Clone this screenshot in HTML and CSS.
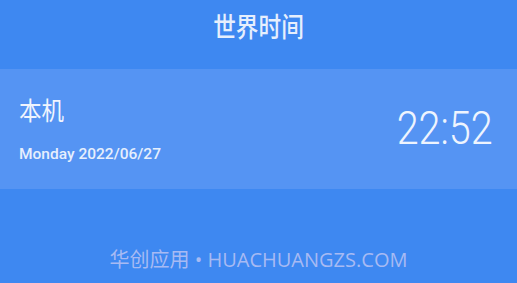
FILE: index.html
```html
<!DOCTYPE html>
<html lang="zh">
<head>
<meta charset="utf-8">
<link rel="stylesheet" href="styles.css">
</head>
<body>
<div class="page">
  <header class="title">世界时间</header>
  <section class="card">
    <div class="info">
      <div class="city">本机</div>
      <div class="date">Monday 2022/06/27</div>
    </div>
    <div class="time">22:52</div>
  </section>
  <div class="spacer"></div>
  <footer class="mark">华创应用 • HUACHUANGZS.COM</footer>
</div>
</body>
</html>
```

FILE: styles.css
```css
html, body {
  margin: 0;
  padding: 0;
  width: 517px;
  height: 283px;
  overflow: hidden;
}
body {
  background: #3e88f1;
  font-family: "Roboto", "Noto Sans CJK SC", sans-serif;
  color: #eef4fe;
}
.page {
  display: flex;
  flex-direction: column;
  height: 283px;
}
.title {
  height: 69px;
  box-sizing: border-box;
  padding-top: 12px;
  text-align: center;
  font-size: 27px;
  font-weight: 500;
  line-height: 32px;
  color: #e6effd;
  transform: scaleX(0.84);
}
.card {
  height: 120px;
  background: #5594f3;
  display: flex;
  align-items: center;
  justify-content: space-between;
  padding: 0 24px 0 19px;
}
.info {
  display: flex;
  flex-direction: column;
  margin-top: 2px;
}
.city {
  font-size: 25px;
  line-height: 30px;
  color: #f0f5fe;
  transform: scaleX(0.9);
  transform-origin: left center;
}
.date {
  margin-top: 17px;
  font-size: 15.5px;
  font-weight: 500;
  line-height: 20px;
  color: #e6effd;
}
.time {
  font-size: 46px;
  font-weight: 300;
  line-height: 50px;
  color: #eef4fe;
  margin-top: -2px;
  transform: scaleX(0.86);
  transform-origin: right center;
}
.spacer { flex: 1; }
.mark {
  height: 34px;
  text-align: center;
  font-family: "Open Sans", "Noto Sans CJK SC", sans-serif;
  font-size: 20px;
  line-height: 22px;
  color: #a7baf3;
  box-sizing: border-box;
}
```
